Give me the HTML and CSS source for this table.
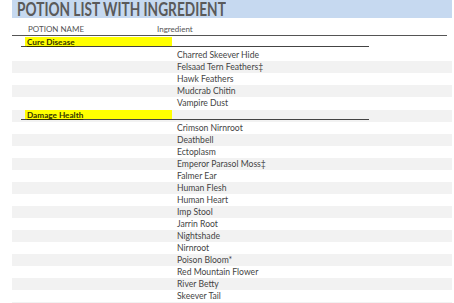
FILE: index.html
```html
<!DOCTYPE html>
<html>
<head>
<meta charset="utf-8">
<link rel="stylesheet" href="styles.css">
</head>
<body>
<div class="sheet">
  <div class="title"><span class="title-text">POTION LIST WITH INGREDIENT</span></div>
  <div class="header">
    <span class="h-name">POTION NAME</span>
    <span class="h-ing">Ingredient</span>
  </div>
  <div class="row cat"><div class="cat-line"><span class="cat-cell">Cure Disease</span></div></div>
  <div class="row"><span class="ing">Charred Skeever Hide</span></div>
  <div class="row alt"><span class="ing">Felsaad Tern Feathers‡</span></div>
  <div class="row"><span class="ing">Hawk Feathers</span></div>
  <div class="row alt"><span class="ing">Mudcrab Chitin</span></div>
  <div class="row"><span class="ing">Vampire Dust</span></div>
  <div class="row cat alt"><div class="cat-line"><span class="cat-cell">Damage Health</span></div></div>
  <div class="row"><span class="ing">Crimson Nirnroot</span></div>
  <div class="row alt"><span class="ing">Deathbell</span></div>
  <div class="row"><span class="ing">Ectoplasm</span></div>
  <div class="row alt"><span class="ing">Emperor Parasol Moss‡</span></div>
  <div class="row"><span class="ing">Falmer Ear</span></div>
  <div class="row alt"><span class="ing">Human Flesh</span></div>
  <div class="row"><span class="ing">Human Heart</span></div>
  <div class="row alt"><span class="ing">Imp Stool</span></div>
  <div class="row"><span class="ing">Jarrin Root</span></div>
  <div class="row alt"><span class="ing">Nightshade</span></div>
  <div class="row"><span class="ing">Nirnroot</span></div>
  <div class="row alt"><span class="ing">Poison Bloom*</span></div>
  <div class="row"><span class="ing">Red Mountain Flower</span></div>
  <div class="row alt"><span class="ing">River Betty</span></div>
  <div class="row"><span class="ing">Skeever Tail</span></div>
  <div class="row alt"><span class="ing">&nbsp;</span></div>
</div>
</body>
</html>
```
FILE: styles.css
```css
html, body {
  margin: 0;
  padding: 0;
  background: #ffffff;
}
body {
  font-family: Lato, "Liberation Sans", sans-serif;
  color: #444444;
  overflow: hidden;
}
.sheet {
  margin-left: 12px;
  width: 440px;
}
.title {
  height: 18px;
  background: #c6d9f0;
  color: #5a5a5a;
  font-weight: bold;
  font-size: 18px;
  line-height: 18px;
  padding-left: 5px;
  white-space: nowrap;
}
.title-text {
  display: inline-block;
  transform: scaleX(0.76);
  transform-origin: left center;
}
.header {
  margin-top: 6px;
  width: 435px;
  height: 11px;
  border-bottom: 1px solid #555555;
  display: grid;
  grid-template-columns: 145px 1fr;
  font-size: 8px;
  line-height: 10px;
  color: #555555;
}
.h-name {
  padding-left: 16px;
}
.row {
  height: 12px;
  display: grid;
  grid-template-columns: 165px 1fr;
  font-size: 8.6px;
  line-height: 12px;
}
.row .ing {
  grid-column: 2;
  white-space: nowrap;
}
.alt {
  background: #f2f2f2;
}
.cat {
  display: block;
}
.cat-line {
  margin-left: 9px;
  margin-top: 1px;
  width: 348px;
  height: 9px;
  border-bottom: 1px solid #444444;
}
.cat-cell {
  display: block;
  margin-left: 4px;
  width: 145px;
  height: 9px;
  background: #ffff00;
  padding-left: 2px;
  font-size: 8.2px;
  line-height: 10px;
  font-weight: bold;
  color: #333300;
  text-decoration: underline;
  white-space: nowrap;
}
```
